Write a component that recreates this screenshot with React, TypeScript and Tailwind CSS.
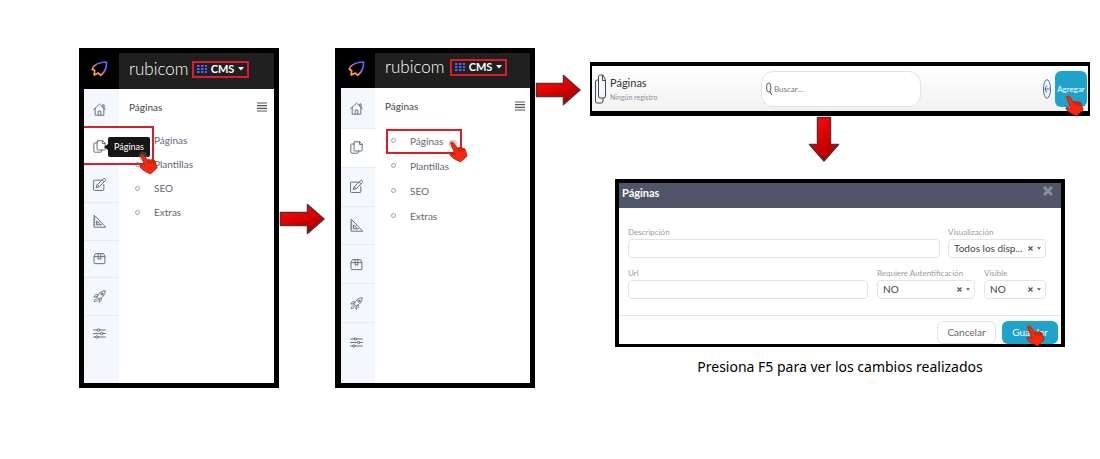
import React from 'react';

type IconProps = { className?: string };

const iconProps = {
  viewBox: '0 0 24 24',
  fill: 'none',
  stroke: 'currentColor',
  strokeWidth: 1.8,
  strokeLinecap: 'round' as const,
  strokeLinejoin: 'round' as const,
  'aria-hidden': true
};

const HomeIcon: React.FC<IconProps> = ({ className }) => (
  <svg {...iconProps} className={className}>
    <path d="M1 12.5 12 2l11 10.5M4 10v12.5h16V10M18 7.5V3.5h2.5V9" />
    <path d="M9.5 22.5V15h5v7.5" />
  </svg>
);

const PagesIcon: React.FC<IconProps> = ({ className }) => (
  <svg {...iconProps} className={className}>
    <path d="M9 1.5h9L22.500 6v11a1.500 1.500 0 0 1-1.500 1.500H9A1.500 1.500 0 0 1 7.500 17V3A1.500 1.500 0 0 1 9 1.500z" />
    <path d="M17.500 1.500v5h5M7.500 5.500H3A1.500 1.500 0 0 0 1.500 7v14A1.500 1.500 0 0 0 3 22.500h11.500A1.500 1.500 0 0 0 16 21v-2.500" />
  </svg>
);

const EditIcon: React.FC<IconProps> = ({ className }) => (
  <svg {...iconProps} className={className}>
    <path d="M14 4H2.500A1.500 1.500 0 0 0 1 5.500v16A1.500 1.500 0 0 0 2.500 23h16a1.500 1.500 0 0 0 1.500-1.500V12" />
    <path d="m8 12.500 11-11a2.100 2.100 0 0 1 3.500 3.500l-11 11-5 1.500zM17 3.500 20.500 7M8 12.500l3.500 3.500" />
  </svg>
);

const RulerIcon: React.FC<IconProps> = ({ className }) => (
  <svg {...iconProps} className={className}>
    <path d="M2 1v21.500h21zM6.500 11.500V18H13z" />
    <path d="M2 5.500h1.500M2 9.500h1.500M2 14h1.500M2 18h1.500M9.500 14.500l2-2M14 19l2-2" />
  </svg>
);

const BoxIcon: React.FC<IconProps> = ({ className }) => (
  <svg {...iconProps} className={className}>
    <path d="M2 8.500 4.500 3h15L22 8.500V20a1.500 1.500 0 0 1-1.500 1.500h-17A1.500 1.500 0 0 1 2 20zM2 8.500h20" />
    <path d="M9.500 3v10.500l2.500-1.500 2.500 1.500V3" />
  </svg>
);

const RocketIcon: React.FC<IconProps> = ({ className }) => (
  <svg {...iconProps} className={className}>
    <path d="M7.500 12.500C10 6.500 15 1.500 22.500 1.500c0 7.500-5 12.500-11 15z" />
    <path d="M9.500 9C5.500 7.500 3 9.500 1.500 13l6-.5M15 14.500c1.500 4-.5 6.500-4 8l.5-6M6 16c-2.500.5-3.500 3-3.500 5.500 2.500 0 5-1 5.500-3.500" />
    <circle cx="16.500" cy="7.500" r="2" />
  </svg>
);

const SlidersIcon: React.FC<IconProps> = ({ className }) => (
  <svg {...iconProps} className={className}>
    <path d="M1 5.500h6.500M12.500 5.500H23M1 12h12.500M18.500 12H23M1 18.500h3.500M9.500 18.500H23" />
    <circle cx="10" cy="5.500" r="2.300" />
    <circle cx="16" cy="12" r="2.300" />
    <circle cx="7" cy="18.500" r="2.300" />
  </svg>
);

const MenuIcon: React.FC<IconProps> = ({ className }) => (
  <svg viewBox="0 0 10 10" className={className} aria-hidden="true">
    <path d="M0 1h10M0 3.700h10M0 6.300h10M0 9h10" stroke="#555" strokeWidth="1.200" />
  </svg>
);

const Logo: React.FC<{ id: string }> = ({ id }) => (
  <svg viewBox="0 0 17 16" className="h-4 w-[17px]" role="img" aria-label="Rubicom">
    <defs>
      <linearGradient id={id} x1="1" y1="0" x2="0" y2="1">
        <stop offset="0" stopColor="#4a6bff" />
        <stop offset="0.35" stopColor="#7d5cf0" />
        <stop offset="0.55" stopColor="#e9759a" />
        <stop offset="0.75" stopColor="#ff9b3f" />
        <stop offset="1" stopColor="#ffb347" />
      </linearGradient>
    </defs>
    <path
      d="M15.500 1C9.500 1 3 3.200 1.200 8.300c1 .2 2 .6 2.500 1.200L3.200 14l4-2 2.600 2.300C13.500 11.500 15.800 6.500 15.500 1z"
      fill="none"
      stroke={`url(#${id})`}
      strokeWidth="1.700"
      strokeLinejoin="round"
    />
  </svg>
);

const GridDots = () => (
  <svg viewBox="0 0 10 8" className="h-2 w-2.5" fill="#5b61e6" aria-hidden="true">
    {[0, 3, 6].map((y) => [0, 4, 8].map((x) => <rect key={`${x}-${y}`} x={x} y={y} width="2.600" height="2" />))}
  </svg>
);

const Caret: React.FC<IconProps> = ({ className }) => (
  <svg viewBox="0 0 6 4" className={className} fill="currentColor" aria-hidden="true">
    <path d="M0 0h6L3 3.500z" />
  </svg>
);

// Red step arrow, pointing right
const StepArrow: React.FC<{ id: string; className?: string }> = ({ id, className }) => (
  <svg viewBox="0 0 46 32" className={className} aria-hidden="true">
    <defs>
      <linearGradient id={id} x1="0" y1="0" x2="0.6" y2="1">
        <stop offset="0" stopColor="#ff1010" />
        <stop offset="0.5" stopColor="#e20000" />
        <stop offset="1" stopColor="#a80000" />
      </linearGradient>
    </defs>
    <path d="M1.500 9.500h27V1.500L45 16 28.500 30.500v-8h-27z" fill={`url(#${id})`} stroke="#5a3035" strokeWidth="1.500" strokeLinejoin="round" />
  </svg>
);

const StepArrowDown = () => (
  <svg viewBox="0 0 32 46" className="h-[46px] w-8" aria-hidden="true">
    <defs>
      <linearGradient id="arrow-down" x1="0" y1="0" x2="0.6" y2="1">
        <stop offset="0" stopColor="#ff1010" />
        <stop offset="0.5" stopColor="#e20000" />
        <stop offset="1" stopColor="#a80000" />
      </linearGradient>
    </defs>
    <path d="M9.500 1.500v27h-8L16 45l14.500-16.500h-8v-27z" fill="url(#arrow-down)" stroke="#5a3035" strokeWidth="1.500" strokeLinejoin="round" />
  </svg>
);

const HandPointer: React.FC<IconProps> = ({ className }) => (
  <svg viewBox="0 0 20 24" className={className} aria-hidden="true">
    <circle cx="5" cy="5" r="4.500" fill="#777" fillOpacity="0.35" />
    <path
      d="M2.600 4.200c.3-1.500 2-1.500 2.900-.3L10 9.500c.3-1.600 1.700-1.500 2.400-.2.600-1.300 2-1 2.500.5.900-1 2.100-.4 2.400 1.100l1.900 6.100-6.700 6-4.700-2.200c-2-1.300-4.600-3-5.600-4.600-.9-1.700.6-2.700 2-1.900l2.800 1.200z"
      fill="#f52a0c"
      stroke="#8f1c0c"
      strokeWidth="0.700"
    />
    <path d="M10 9.500l1.300 3.200M12.400 9.300l1.400 3.200M14.900 9.800l1.200 2.900" stroke="#8f1c0c" strokeWidth="0.800" />
  </svg>
);

const railItems = [
  { label: 'Inicio', Icon: HomeIcon },
  { label: 'Páginas', Icon: PagesIcon },
  { label: 'Editar', Icon: EditIcon },
  { label: 'Diseño', Icon: RulerIcon },
  { label: 'Productos', Icon: BoxIcon },
  { label: 'Lanzar', Icon: RocketIcon },
  { label: 'Ajustes', Icon: SlidersIcon }
];

const menuItems = ['Páginas', 'Plantillas', 'SEO', 'Extras'];

interface SidebarProps {
  id: string;
  step: 1 | 2;
}

const Sidebar: React.FC<SidebarProps> = ({ id, step }) => {
  const first = step === 1;

  return (
    <section className={`relative mt-12 flex h-[340px] w-[200px] shrink-0 flex-col border-y-[5px] border-r-[5px] border-black bg-white ${first ? 'border-l-[5px]' : 'border-l-[6px]'}`}>
      <header className={`flex shrink-0 bg-[#202020] ${first ? 'h-9' : 'h-[35px]'}`}>
        <div className={`flex shrink-0 justify-center bg-black pt-2 pr-1 ${first ? 'w-[35px]' : 'w-[34px]'}`}>
          <Logo id={`${id}-logo`} />
        </div>
        <div className={`flex h-8 items-center pl-2.5 ${first ? 'gap-1' : 'gap-1.5 pb-1'}`}>
          <span className="w-[59px] text-[17px] leading-5 font-light text-white">rubicom</span>
          <button type="button" className="flex h-[17px] w-[57px] items-center justify-between border-2 border-[#d81e2c] px-[3px] text-white">
            <GridDots />
            <span className="text-[11px] leading-3 font-bold">CMS</span>
            <Caret className="h-1 w-1.5" />
          </button>
        </div>
      </header>

      <div className="flex flex-1">
        <nav className={`shrink-0 bg-[#f4f8fc] ${first ? 'w-[35px]' : 'w-[34px]'}`}>
          <ul className={`flex flex-col pt-0.5 ${first ? 'h-[263px]' : 'h-[273px]'}`}>
            {railItems.map(({ label, Icon }, index) => (
              <li key={label} className={`flex-1 ${index < 6 ? 'border-b border-[#e6ebef]' : ''} ${index === 1 ? 'bg-white' : ''}`}>
                <a href="#" aria-label={label} className="flex h-full items-center justify-center pr-1 text-[#62707d]">
                  <Icon className="size-[13px]" />
                </a>
              </li>
            ))}
          </ul>
        </nav>

        <div className="flex-1 pt-2.5 pl-2.5">
          <div className={`flex items-center justify-between ${first ? 'pr-[7px]' : 'pr-[5px]'}`}>
            <h2 className="text-[10px] leading-4 text-[#444]">Páginas</h2>
            <button type="button" aria-label="Menú">
              <MenuIcon className="size-2.5" />
            </button>
          </div>
          <ul className={first ? 'pt-[13px]' : 'pt-3.5'}>
            {menuItems.map((item) => (
              <li key={item} className={`flex items-center pl-1.5 ${first ? 'h-6' : 'h-[25px]'}`}>
                <span className="mr-3.5 size-[5px] rounded-full border border-[#9aa3ab]" />
                <a href="#" className="text-[10px] leading-4 text-[#5d6875]">{item}</a>
              </li>
            ))}
          </ul>
        </div>
      </div>

      {first ? (
        <>
          <div className="absolute top-[73px] left-0 h-[39px] w-[70px] border-2 border-l-0 border-[#cc2431]" />
          <div role="tooltip" className="absolute top-[84px] left-6 flex h-5 w-[42px] items-center justify-center rounded-xs bg-[#161616] text-[9px] text-white">
            <span className="absolute -left-1 size-0 border-y-[3px] border-r-4 border-y-transparent border-r-[#161616]" />
            Páginas
          </div>
          <HandPointer className="absolute top-[98px] left-[54px] h-6 w-5" />
        </>
      ) : (
        <>
          <div className="absolute top-[76px] left-[45px] h-[25px] w-[76px] border-2 border-[#e01b24]" />
          <HandPointer className="absolute top-[86px] left-[107px] h-6 w-5" />
        </>
      )}
    </section>
  );
};

const ListToolbar = () => (
  <section className="relative flex h-[54px] items-center border-x-2 border-t-4 border-b-[5px] border-black bg-linear-to-b from-white to-[#f1f1f1]">
    <div className="flex flex-1 items-center gap-1 pl-[3px]">
      <svg viewBox="0 0 11 30" className="h-[30px] w-[11px]" fill="none" stroke="#3d4752" strokeWidth="1" aria-hidden="true">
        <path d="M4.500 1H8l2.500 5v16a1.500 2 0 0 1-1.500 2H5a1.500 2 0 0 1-1.500-2V3A1.500 2 0 0 1 4.500 1zM7.500 1v5.500h3M3.500 6H2A1.500 2 0 0 0 .5 8v19A1.500 2 0 0 0 2 29h4.500A1.500 2 0 0 0 8 27v-3" />
      </svg>
      <div>
        <h2 className="text-[11px] leading-4 text-[#333]">Páginas</h2>
        <p className="text-[7px] leading-3 text-[#87919b]">Ningún registro</p>
      </div>
    </div>

    <label className="flex h-9 w-[160px] items-center gap-0.5 rounded-xl border border-[#e2e2e2] bg-white pl-1">
      <svg viewBox="0 0 6 14" className="h-3.5 w-1.5" fill="none" stroke="#444b5a" aria-hidden="true">
        <ellipse cx="2.700" cy="5.500" rx="2.100" ry="4.500" />
        <path d="M4 9.500 5.700 13" />
      </svg>
      <input type="text" aria-label="Buscar" placeholder="Buscar..." className="w-32 text-[8px] outline-none placeholder:text-[#777]" />
    </label>

    <div className="flex flex-1 items-center justify-end gap-1 pr-px">
      <button type="button" aria-label="Volver">
        <svg viewBox="0 0 8 20" className="h-5 w-2" fill="none" stroke="#3a66a8" aria-hidden="true">
          <ellipse cx="4" cy="10" rx="3.500" ry="9.300" />
          <path d="M6.500 10H2M3.800 6.500 2 10l1.800 3.500" />
        </svg>
      </button>
      <button type="button" className="h-9 w-8 rounded-md bg-[#1fa3cb] text-[8px] text-white">Agregar</button>
    </div>
    <HandPointer className="absolute top-[27px] right-1 h-6 w-5" />
  </section>
);

interface SelectFieldProps {
  id: string;
  label: string;
  value: string;
  className: string;
}

const labelClass = 'block text-[8px] leading-[14px] text-[#9b9b9b]';
const fieldClass = 'block h-[19px] w-full rounded-sm border border-[#e4e4e4] bg-white text-[10px] text-[#444] outline-none';

const SelectField: React.FC<SelectFieldProps> = ({ id, label, value, className }) => (
  <div className={`relative ${className}`}>
    <label htmlFor={id} className={labelClass}>{label}</label>
    <select id={id} className={`${fieldClass} appearance-none pl-[5px]`}>
      <option>{value}</option>
    </select>
    <span className="pointer-events-none absolute right-[5px] bottom-0 flex h-[19px] items-center gap-1 text-[#555]">
      <svg viewBox="0 0 5 5" className="size-[5px]" stroke="currentColor" strokeWidth="1.200" aria-hidden="true">
        <path d="m.5.5 4 4m0-4-4 4" />
      </svg>
      <Caret className="h-[3px] w-1" />
    </span>
  </div>
);

const PageDialog = () => (
  <section role="dialog" aria-label="Páginas" className="relative mx-[25px] border-x-4 border-t-4 border-b-[3px] border-black bg-white">
    <header className="flex h-[25px] justify-between bg-[#515569] pr-2 pl-[3px]">
      <h2 className="text-[11px] leading-5 font-bold text-white">Páginas</h2>
      <button type="button" aria-label="Cerrar" className="h-4">
        <svg viewBox="0 0 10 10" className="size-2.5" stroke="#8a8d9b" strokeWidth="3" aria-hidden="true">
          <path d="m1 1 8 8m0-8-8 8" />
        </svg>
      </button>
    </header>

    <div className="flex flex-col gap-2 pt-[17px] pr-[15px] pb-4 pl-[9px]">
      <div className="flex gap-2">
        <div className="flex-1">
          <label htmlFor="descripcion" className={labelClass}>Descripción</label>
          <input id="descripcion" type="text" className={fieldClass} />
        </div>
        <SelectField id="visualizacion" label="Visualización" value="Todos los disp..." className="w-[98px]" />
      </div>
      <div className="flex gap-[9px]">
        <div className="flex-1">
          <label htmlFor="url" className={labelClass}>Url</label>
          <input id="url" type="text" className={fieldClass} />
        </div>
        <SelectField id="autentificacion" label="Requiere Autentificación" value="NO" className="w-[98px]" />
        <SelectField id="visible" label="Visible" value="NO" className="w-[62px]" />
      </div>
    </div>

    <footer className="flex justify-end gap-1.5 border-t border-[#e6e6e6] pt-[5px] pr-[3px]">
      <button type="button" className="h-[23px] w-[59px] rounded-md border border-[#e6e6e6] text-[10px] text-[#666]">Cancelar</button>
      <button type="button" className="h-[23px] w-14 rounded-md bg-[#1fa3cb] text-[10px] text-white">Guardar</button>
    </footer>
    <HandPointer className="absolute right-4 bottom-[-3px] h-6 w-5" />
  </section>
);

const App = () => (
  <main className="flex min-h-screen items-start bg-white pr-2.5 pl-[79px] font-['Lato',sans-serif]">
    <Sidebar id="step-1" step={1} />
    <div className="mt-[203px] w-14 shrink-0">
      <StepArrow id="arrow-1" className="h-8 w-[46px]" />
    </div>
    <Sidebar id="step-2" step={2} />
    <div className="mt-[74px] w-[55px] shrink-0">
      <StepArrow id="arrow-2" className="h-8 w-[46px]" />
    </div>
    <div className="mt-[62px] flex-1">
      <ListToolbar />
      <div className="flex h-[63px] justify-center pr-8">
        <StepArrowDown />
      </div>
      <PageDialog />
      <p className="pt-2.5 text-center font-['Noto_Sans',sans-serif] text-sm leading-5 text-black">
        Presiona F5 para ver los cambios realizados
      </p>
    </div>
  </main>
);

export default App;
